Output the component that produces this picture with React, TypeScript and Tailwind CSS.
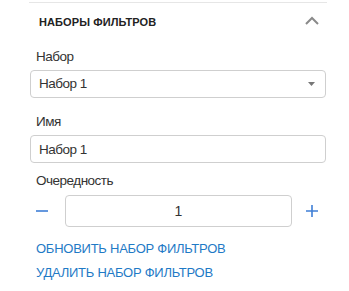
import React, { useState } from 'react';

export default function App() {
  const [order, setOrder] = useState(1);
  const [name, setName] = useState('Набор 1');

  return (
    <div className="w-[349px] h-[291px] bg-white font-['Liberation_Sans',Arial,sans-serif] text-[#333]">
      <div className="ml-[29px] w-[298px] pt-[2px]">
        <div className="border-t border-[#e6e6e6]">
          {/* header */}
          <div className="flex items-center justify-between h-[38px] pl-[10px] pr-[7px]">
            <span className="text-[11px] font-bold uppercase text-[#222] tracking-[0.1px]">Наборы фильтров</span>
            <svg width="16" height="10" viewBox="0 0 16 10" className="mt-[-2px]">
              <path d="M2 8 L8 2 L14 8" fill="none" stroke="#8a8a8a" strokeWidth="2" />
            </svg>
          </div>

          <div className="pl-[1px] pr-[1px]">
            <div className="mt-[6px] pl-[6px] text-[13.5px] tracking-[-0.5px] leading-[20px]">Набор</div>
            <div className="mt-[3px] h-[28px] flex items-center justify-between border border-[#cfcfcf] rounded-[4px] pl-[8px] pr-[10px] text-[13.5px] tracking-[-0.5px]">
              <span>Набор 1</span>
              <svg width="7" height="4" viewBox="0 0 7 4">
                <path d="M0 0 L7 0 L3.5 4 Z" fill="#777" />
              </svg>
            </div>

            <div className="mt-[14px] pl-[6px] text-[13.5px] tracking-[-0.5px] leading-[20px]">Имя</div>
            <input
              value={name}
              onChange={(e) => setName(e.target.value)}
              className="mt-[3px] block w-full h-[28px] border border-[#cfcfcf] rounded-[4px] pl-[8px] text-[13.5px] tracking-[-0.5px] text-[#333] outline-none"
            />

            <div className="mt-[8px] pl-[6px] text-[13.5px] tracking-[-0.5px] leading-[20px]">Очередность</div>
            <div className="mt-[4px] flex items-center h-[32px]">
              <button onClick={() => setOrder(order - 1)} className="w-[24px] h-[32px] flex items-center justify-center">
                <svg width="12" height="2" viewBox="0 0 12 2">
                  <path d="M0 1 H12" stroke="#3f7fd6" strokeWidth="1.6" />
                </svg>
              </button>
              <div className="ml-[11px] w-[227px] h-[32px] border border-[#cfcfcf] rounded-[4px] flex items-center justify-center text-[14px]">
                {order}
              </div>
              <button onClick={() => setOrder(order + 1)} className="ml-[8px] w-[24px] h-[32px] flex items-center justify-center">
                <svg width="12" height="12" viewBox="0 0 12 12">
                  <path d="M0 6 H12 M6 0 V12" stroke="#3f7fd6" strokeWidth="1.6" />
                </svg>
              </button>
            </div>

            <div className="mt-[12px] pl-[6px] flex flex-col gap-[4px] text-[13px] tracking-[-0.25px] leading-[20px] uppercase text-[#1f7ac6]">
              <a className="cursor-pointer">Обновить набор фильтров</a>
              <a className="cursor-pointer">Удалить набор фильтров</a>
            </div>
          </div>
        </div>
      </div>
    </div>
  );
}
